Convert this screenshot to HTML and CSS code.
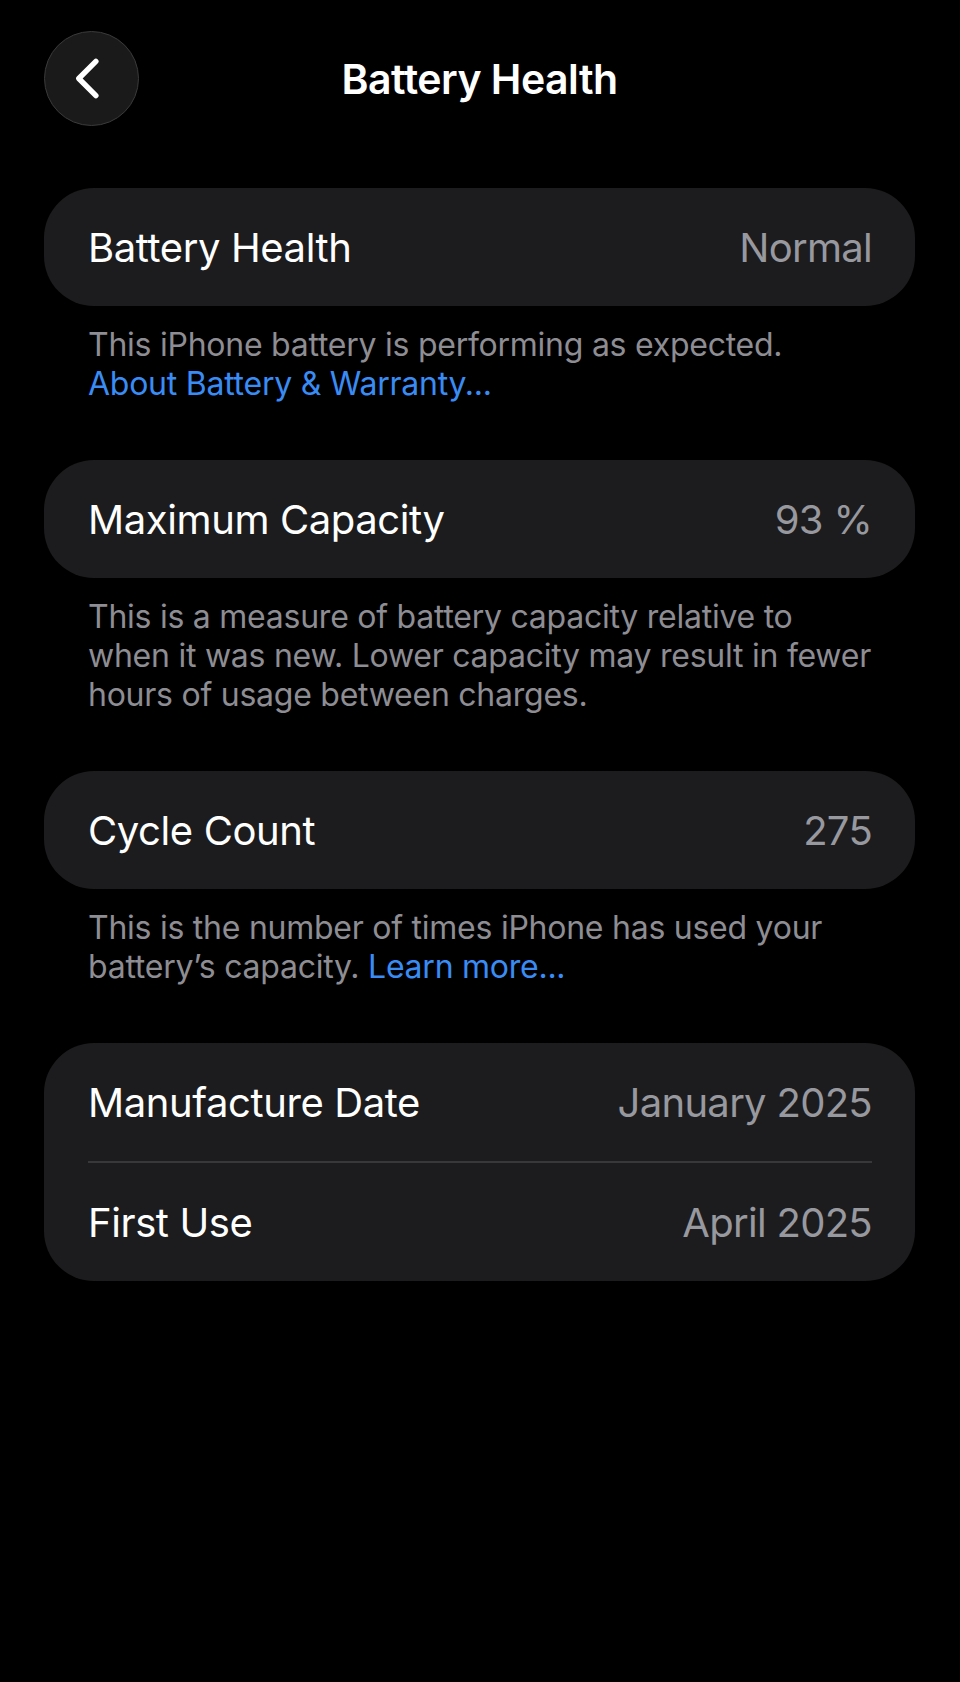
FILE: index.html
```html
<!DOCTYPE html>
<html lang="en">
<head>
    <meta charset="UTF-8">
    <meta name="viewport" content="width=device-width, initial-scale=1.0">
    <title>Battery Health</title>
    <link rel="stylesheet" href="styles.css">
</head>
<body>

    <header class="nav">
        <button type="button" class="back-btn" aria-label="Back">
            <svg viewBox="0 0 95 95" width="95" height="95">
                <path d="M52 30 L34.5 47.5 L52 65" fill="none" stroke="#fff" stroke-width="5.5" stroke-linecap="round" stroke-linejoin="round"/>
            </svg>
        </button>
        <h1>Battery Health</h1>
        <span class="nav-spacer"></span>
    </header>

    <main class="content">
        <section class="group">
            <div class="card">
                <div class="row">
                    <span class="label">Battery Health</span>
                    <span class="value">Normal</span>
                </div>
            </div>
            <p class="footer">This iPhone battery is performing as expected.<br><a href="#">About Battery &amp; Warranty...</a></p>
        </section>

        <section class="group">
            <div class="card">
                <div class="row">
                    <span class="label">Maximum Capacity</span>
                    <span class="value">93 %</span>
                </div>
            </div>
            <p class="footer">This is a measure of battery capacity relative to when it was new. Lower capacity may result in fewer hours of usage between charges.</p>
        </section>

        <section class="group">
            <div class="card">
                <div class="row">
                    <span class="label">Cycle Count</span>
                    <span class="value">275</span>
                </div>
            </div>
            <p class="footer">This is the number of times iPhone has used your battery’s capacity. <a href="#">Learn more...</a></p>
        </section>

        <section class="group">
            <div class="card">
                <div class="row">
                    <span class="label">Manufacture Date</span>
                    <span class="value">January 2025</span>
                </div>
                <div class="divider"></div>
                <div class="row">
                    <span class="label">First Use</span>
                    <span class="value">April 2025</span>
                </div>
            </div>
        </section>
    </main>

</body>
</html>
```

FILE: styles.css
```css
body {
    margin: 0;
    background-color: #000;
    color: #fff;
    font-family: Inter, "Noto Sans", sans-serif;
    min-height: 1682px;
}

.nav {
    display: grid;
    grid-template-columns: 95px 1fr 95px;
    align-items: center;
    padding: 31px 45px 0 44px;
}

.back-btn {
    width: 95px;
    height: 95px;
    padding: 0;
    border-radius: 50%;
    background-color: #1a1a1a;
    border: 1.5px solid #3a3a3a;
    display: flex;
    align-items: center;
    justify-content: center;
    cursor: pointer;
}

    .back-btn svg {
        display: block;
    }

.nav h1 {
    margin: 0;
    text-align: center;
    font-size: 41px;
    font-weight: 600;
    letter-spacing: -0.5px;
}

.content {
    padding: 62px 45px 0 44px;
}

.group {
    margin-bottom: 57px;
}

.card {
    background-color: #1c1c1e;
    border-radius: 50px;
    padding: 0 43px 0 44px;
}

.row {
    height: 118px;
    display: flex;
    align-items: center;
    justify-content: space-between;
}

.label {
    font-size: 40px;
    letter-spacing: -0.4px;
}

.value {
    font-size: 40px;
    letter-spacing: -0.7px;
    color: #98989f;
}

.divider {
    height: 2px;
    background-color: #38383a;
}

.footer {
    margin: 19px 0 0;
    padding: 0 40px 0 44px;
    font-size: 32px;
    line-height: 39px;
    letter-spacing: -0.25px;
    color: #8d8d93;
}

    .footer a {
        color: #3a8cf5;
        text-decoration: none;
    }
```
